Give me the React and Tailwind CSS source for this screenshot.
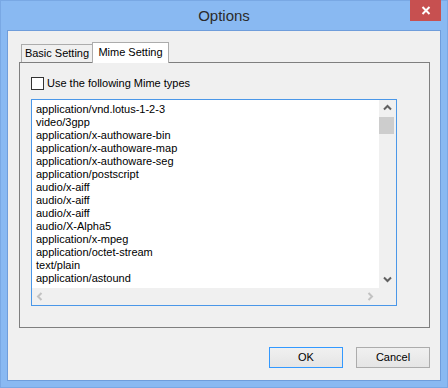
import React from "react";

const items = [
  "application/vnd.lotus-1-2-3",
  "video/3gpp",
  "application/x-authoware-bin",
  "application/x-authoware-map",
  "application/x-authoware-seg",
  "application/postscript",
  "audio/x-aiff",
  "audio/x-aiff",
  "audio/x-aiff",
  "audio/X-Alpha5",
  "application/x-mpeg",
  "application/octet-stream",
  "text/plain",
  "application/astound",
];

function Chevron({ dir, color }) {
  const paths = {
    up: "M1 5.5 L4.5 2 L8 5.5",
    down: "M1 2.5 L4.5 6 L8 2.5",
    left: "M5.5 1 L2 4.5 L5.5 8",
    right: "M2.5 1 L6 4.5 L2.5 8",
  };
  return (
    <svg width="9" height="9" viewBox="0 0 9 9">
      <path d={paths[dir]} fill="none" stroke={color} strokeWidth="2" />
    </svg>
  );
}

export default function App() {
  return (
    <div className="w-[448px] h-[388px] bg-[#89b9f2] border border-[#79a8e4] flex flex-col font-['Liberation_Sans',Arial,sans-serif] text-black">
      <div className="h-[29px] relative flex items-center justify-center">
        <span className="text-[15px] text-[#2b2b2b] mt-[1px]">Options</span>
        <div className="absolute top-[-1px] right-[6px] w-[31px] h-[21px] bg-[#c75050] flex items-center justify-center">
          <svg width="10" height="9" viewBox="0 0 10 9">
            <path d="M1.5 1 L8.5 8 M8.5 1 L1.5 8" stroke="white" strokeWidth="2" />
          </svg>
        </div>
      </div>
      <div className="flex-1 mx-[6px] mb-[6px] bg-[#f0f0f0] border border-[#6f9ddb] flex flex-col">
        <div className="mt-[11px] ml-[13px] flex items-end h-[20px] text-[11px]">
          <div className="w-[71px] h-[18px] border-t border-l border-[#acacac] flex items-center justify-center">
            Basic Setting
          </div>
          <div className="w-[77px] h-[21px] -mb-px border-t border-l border-r border-[#acacac] bg-white relative z-10 flex items-center justify-center pb-[1px]">
            Mime Setting
          </div>
        </div>
        <div className="ml-[11px] w-[411px] h-[266px] border border-[#7f7f7f] px-[11px] flex flex-col">
          <div className="mt-[14px] h-[13px] flex items-center gap-[3px] text-[11px] leading-[13px]">
            <div className="w-[13px] h-[13px] border border-[#333] bg-white" />
            <span>Use the following Mime types</span>
          </div>
          <div className="mt-[9px] w-[366px] h-[207px] border border-[#4a97e8] grid grid-cols-[1fr_17px] grid-rows-[1fr_17px] bg-[#f0f0f0]">
            <div className="bg-white pl-[4px] pt-[3px] text-[11px] leading-[13px] overflow-hidden">
              {items.map((t, i) => (
                <div key={i} className="whitespace-nowrap">{t}</div>
              ))}
            </div>
            <div className="flex flex-col">
              <div className="h-[17px] flex items-center justify-center">
                <Chevron dir="up" color="#606060" />
              </div>
              <div className="h-[17px] w-[15px] bg-[#cdcdcd]" />
              <div className="flex-1" />
              <div className="h-[17px] flex items-center justify-center">
                <Chevron dir="down" color="#606060" />
              </div>
            </div>
            <div className="flex items-center justify-between">
              <div className="w-[17px] h-[17px] flex items-center justify-center">
                <Chevron dir="left" color="#c2c2c2" />
              </div>
              <div className="w-[17px] h-[17px] flex items-center justify-center">
                <Chevron dir="right" color="#c2c2c2" />
              </div>
            </div>
            <div />
          </div>
        </div>
        <div className="mt-[19px] flex justify-end gap-[13px] pr-[10px] text-[11px]">
          <div className="w-[74px] h-[21px] border border-[#3399ff] bg-gradient-to-b from-[#f0f0f0] to-[#e5e5e5] flex items-center justify-center">
            OK
          </div>
          <div className="w-[74px] h-[21px] border border-[#acacac] bg-gradient-to-b from-[#f0f0f0] to-[#e5e5e5] flex items-center justify-center">
            Cancel
          </div>
        </div>
      </div>
    </div>
  );
}
